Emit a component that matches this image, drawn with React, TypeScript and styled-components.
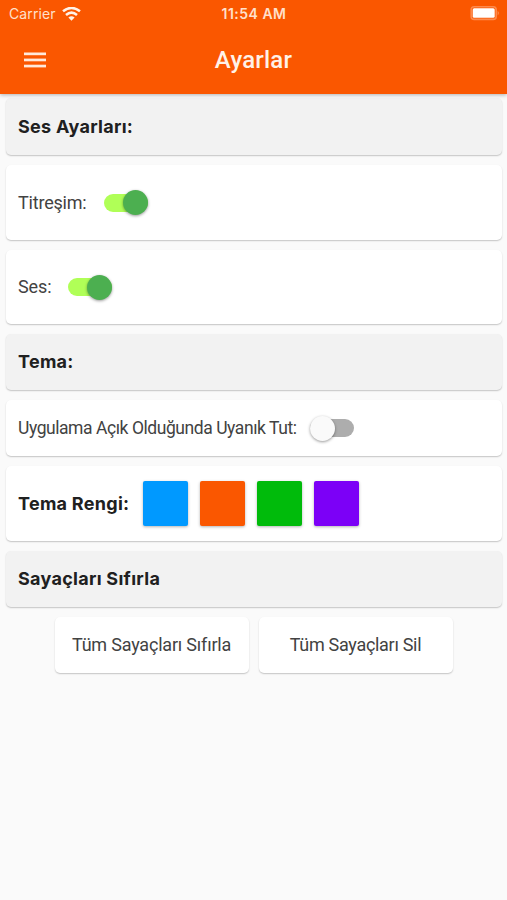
import React, { useState } from "react";
import styled, { createGlobalStyle } from "styled-components";

const GlobalStyle = createGlobalStyle`
  * { box-sizing: border-box; }
  body { margin: 0; background: #fafafa; }
`;

const Screen = styled.div`
  width: 507px;
  height: 900px;
  overflow: hidden;
  background: #fafafa;
  color: #424242;
  font-family: Roboto, sans-serif;
`;

const Header = styled.header`
  position: relative;
  height: 94px;
  background: #fa5700;
  box-shadow: 0 1px 4px rgba(0, 0, 0, 0.3);
  color: #fff2e8;
`;

const StatusBar = styled.div`
  display: grid;
  grid-template-columns: 1fr auto 1fr;
  align-items: center;
  height: 28px;
  padding: 0 7px 0 9px;
  font: 400 14px/28px Inter, sans-serif;
  color: #ffe0cb;
`;

const Carrier = styled.div`
  display: flex;
  align-items: center;
  gap: 6px;
  letter-spacing: 0.1px;
`;

const Clock = styled.div`
  margin-right: 1px;
  font-size: 14px;
  font-weight: 600;
  letter-spacing: 0.5px;
`;

const BatteryIcon = styled.svg`
  justify-self: end;
  margin-bottom: 1px;
`;

const TitleBar = styled.div`
  display: grid;
  grid-template-columns: 70px 1fr 70px;
  align-items: center;
  height: 64px;
`;

const MenuButton = styled.button`
  display: flex;
  padding: 0 0 0 24px;
  border: 0;
  background: none;
`;

const Title = styled.h1`
  margin: 0;
  text-align: center;
  font-size: 24px;
  font-weight: 500;
  line-height: 30px;
  letter-spacing: 0.2px;
`;

const Content = styled.main`
  display: flex;
  flex-direction: column;
  gap: 10px;
  padding: 4px 5px 0 6px;
`;

const Card = styled.section<{ $height: number; $shaded?: boolean }>`
  display: flex;
  align-items: center;
  height: ${(p) => p.$height}px;
  padding-left: 12px;
  border-radius: 5px;
  background: ${(p) => (p.$shaded ? "#f2f2f2" : "#fff")};
  box-shadow: 0 1px 1.5px rgba(0, 0, 0, 0.22);
`;

const Heading = styled.h2`
  margin: 0;
  font: 700 18px/24px Inter, sans-serif;
  letter-spacing: 0.28px;
  color: #202020;
  white-space: nowrap;
`;

const Label = styled.span<{ $size?: number; $spacing?: number }>`
  font-size: ${(p) => p.$size ?? 18}px;
  line-height: 24px;
  letter-spacing: ${(p) => p.$spacing ?? -0.2}px;
  white-space: nowrap;
`;

const Toggle = styled.button<{ $on: boolean; $gap: number }>`
  display: flex;
  align-items: center;
  justify-content: ${(p) => (p.$on ? "flex-end" : "flex-start")};
  width: 44px;
  height: 18px;
  margin-left: ${(p) => p.$gap}px;
  padding: 0;
  border: 0;
  border-radius: 9px;
  background: ${(p) => (p.$on ? "#b0ff57" : "#adadad")};
`;

const Thumb = styled.span<{ $on: boolean }>`
  flex: none;
  width: 25px;
  height: 25px;
  border-radius: 50%;
  background: ${(p) => (p.$on ? "#4caf50" : "#fafafa")};
  box-shadow: 0 1px 3px rgba(0, 0, 0, 0.4);
`;

const Swatches = styled.div`
  display: flex;
  gap: 12px;
  margin-left: auto;
  padding-right: 143px;
`;

const Swatch = styled.button<{ $color: string }>`
  width: 45px;
  height: 45px;
  padding: 0;
  border: 0;
  border-radius: 2px;
  background: ${(p) => p.$color};
  box-shadow: 0 1px 3px rgba(0, 0, 0, 0.3);
`;

const Actions = styled.div`
  display: flex;
  justify-content: center;
  gap: 10px;
  padding-right: 1px;
`;

const ActionButton = styled.button`
  width: 194px;
  height: 56px;
  padding: 0;
  border: 0;
  border-radius: 5px;
  background: #fff;
  color: inherit;
  font-family: inherit;
  box-shadow: 0 1px 1.5px rgba(0, 0, 0, 0.22);
`;

function Switch({ initial, gap, label }: { initial: boolean; gap: number; label: string }) {
  const [on, setOn] = useState(initial);
  return (
    <Toggle $on={on} $gap={gap} role="switch" aria-checked={on} aria-label={label} onClick={() => setOn(!on)}>
      <Thumb $on={on} />
    </Toggle>
  );
}

const themeColors = ["#0099ff", "#fa5700", "#00bb0b", "#7c00f7"];

export default function App() {
  return (
    <>
      <GlobalStyle />
      <Screen>
        <Header>
          <StatusBar>
            <Carrier>
              Carrier
              <svg width="19" height="15" viewBox="0 0 19 15" fill="none" stroke="#fff2e8" strokeWidth="2.6">
                <path d="M1 4.3Q9.5 -2.3 18 4.3" />
                <path d="M4 7.9Q9.5 3.3 15 7.9" />
                <path d="M6.4 10.5Q9.5 7.9 12.6 10.5L9.5 13.7Z" fill="#fff2e8" stroke="none" />
              </svg>
            </Carrier>
            <Clock>11:54 AM</Clock>
            <BatteryIcon width="30" height="15" viewBox="0 0 30 15">
              <rect x="1.2" y="0.8" width="25" height="12.6" rx="3" fill="none" stroke="#fd8a4d" strokeWidth="1.6" />
              <rect x="2.7" y="2.3" width="22" height="9.4" rx="1.5" fill="#fff" />
              <path d="M27.6 4.8Q30.3 7.1 27.6 9.4Z" fill="#fd8a4d" />
            </BatteryIcon>
          </StatusBar>
          <TitleBar>
            <MenuButton aria-label="Menü">
              <svg width="22" height="16" viewBox="0 0 22 16" fill="#ffe9da">
                <rect y="0.5" width="22" height="2.7" />
                <rect y="6.6" width="22" height="2.7" />
                <rect y="12.7" width="22" height="2.7" />
              </svg>
            </MenuButton>
            <Title>Ayarlar</Title>
          </TitleBar>
        </Header>
        <Content>
          <Card $height={57} $shaded><Heading>Ses Ayarları:</Heading></Card>
          <Card $height={75}>
            <Label>Titreşim:</Label>
            <Switch initial gap={17} label="Titreşim" />
          </Card>
          <Card $height={74}>
            <Label $spacing={-0.1}>Ses:</Label>
            <Switch initial gap={17} label="Ses" />
          </Card>
          <Card $height={56} $shaded><Heading>Tema:</Heading></Card>
          <Card $height={56}>
            <Label $size={17.5} $spacing={-0.44}>Uygulama Açık Olduğunda Uyanık Tut:</Label>
            <Switch initial={false} gap={13} label="Uyanık Tut" />
          </Card>
          <Card $height={75}>
            <Heading>Tema Rengi:</Heading>
            <Swatches>
              {themeColors.map((c) => <Swatch key={c} $color={c} aria-label={c} />)}
            </Swatches>
          </Card>
          <Card $height={56} $shaded><Heading>Sayaçları Sıfırla</Heading></Card>
          <Actions>
            <ActionButton><Label>Tüm Sayaçları Sıfırla</Label></ActionButton>
            <ActionButton><Label $spacing={-0.3}>Tüm Sayaçları Sil</Label></ActionButton>
          </Actions>
        </Content>
      </Screen>
    </>
  );
}
